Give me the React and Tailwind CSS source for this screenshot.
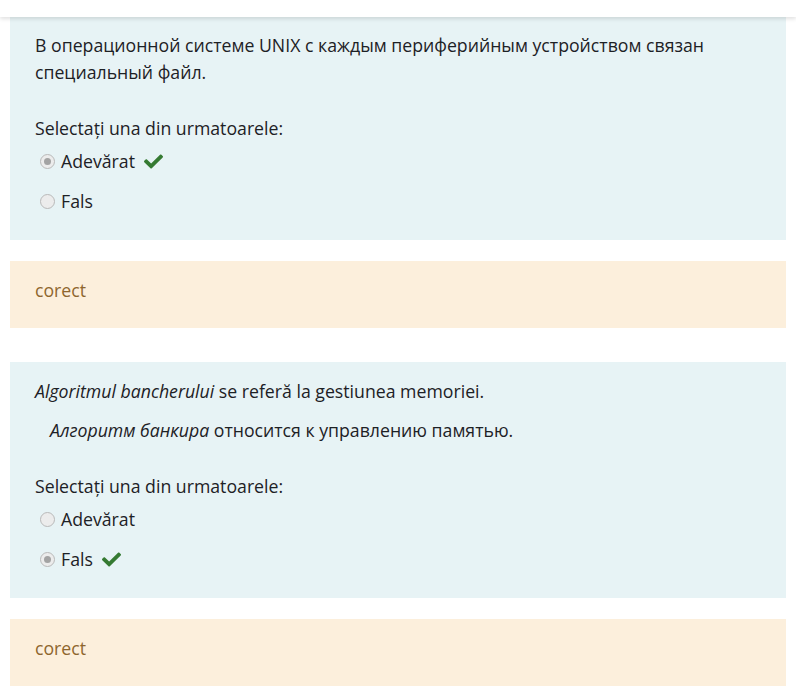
function CheckMark() {
  return (
    <svg viewBox="0 0 512 512" className="ml-[3px] h-[19px] w-[19px] text-[#357a32]" fill="currentColor">
      <path d="M173.898 439.404l-166.4-166.4c-9.997-9.997-9.997-26.206 0-36.204l36.203-36.204c9.997-9.998 26.207-9.998 36.204 0L192 312.69 432.095 72.596c9.997-9.997 26.207-9.997 36.204 0l36.203 36.204c9.997 9.997 9.997 26.206 0 36.204l-294.4 294.401c-9.998 9.997-26.207 9.997-36.204-.001z" />
    </svg>
  )
}

function Radio({ checked }) {
  return (
    <span className="flex h-[15px] w-[15px] shrink-0 items-center justify-center rounded-full border border-[#b9b9b9] bg-[#ececec]">
      {checked && <span className="h-[7px] w-[7px] rounded-full bg-[#a3a3a3]" />}
    </span>
  )
}

function Option({ label, checked, correct }) {
  return (
    <div className="flex h-[40px] items-center gap-[6px] pl-[5px]">
      <Radio checked={checked} />
      <span>{label}</span>
      {correct && <CheckMark />}
    </div>
  )
}

function Question({ children, options, className = '' }) {
  return (
    <div className={`bg-[#e7f3f5] px-[25px] pt-[16px] pb-[19px] ${className}`}>
      {children}
      <p className="mt-[29px]">Selectați una din urmatoarele:</p>
      <div className="-mt-[1px]">
        {options.map((o) => (
          <Option key={o.label} {...o} />
        ))}
      </div>
    </div>
  )
}

function Feedback() {
  return (
    <div className="mt-[21px] h-[67px] bg-[#fcefdc] px-[25px] pt-[16px] text-[#8e662e]">
      corect
    </div>
  )
}

export default function App() {
  return (
    <div className="relative min-h-[695px] overflow-hidden bg-white font-['Open_Sans',sans-serif] text-[17.7px] leading-[27px] text-[#1d2125]">
      <div className="absolute inset-x-0 top-0 z-10 h-[17px] bg-white shadow-[0_2px_4px_rgba(0,0,0,0.12)]" />
      <div className="px-[10px]">
        <Question
          className="-mt-[23px]"
          options={[
            { label: 'Adevărat', checked: true, correct: true },
            { label: 'Fals' },
          ]}
        >
          <p>
            <em>În sistemul de operare UNIX</em> fiecărui dispozitiv periferic îi corespunde un fișier special.
          </p>
          <p className="mt-[12px]">
            В операционной системе UNIX с каждым периферийным устройством связан специальный файл.
          </p>
        </Question>
        <Feedback />
        <Question
          className="mt-[34px]"
          options={[
            { label: 'Adevărat' },
            { label: 'Fals', checked: true, correct: true },
          ]}
        >
          <p>
            <em>Algoritmul bancherului</em> se referă la gestiunea memoriei.
          </p>
          <p className="mt-[12px] pl-[15px]">
            <em>Алгоритм банкира</em> относится к управлению памятью.
          </p>
        </Question>
        <Feedback />
      </div>
    </div>
  )
}
